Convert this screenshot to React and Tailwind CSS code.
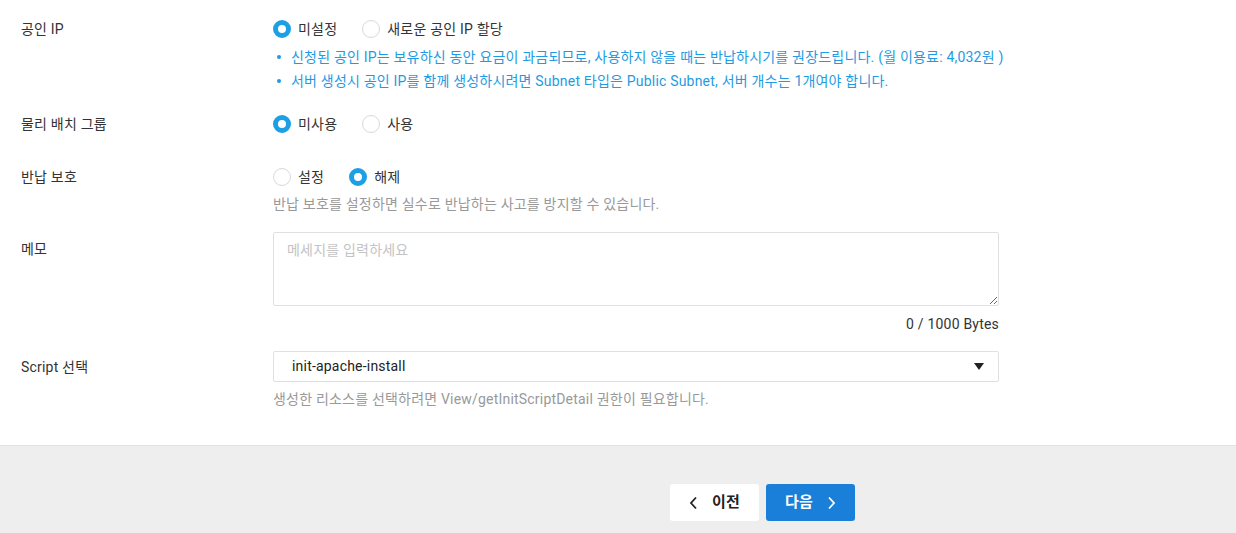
import React from "react";

const font = { fontFamily: "Roboto, 'Noto Sans CJK KR', sans-serif" };

function Radio({ checked, label }) {
  return (
    <label className="flex items-center h-[22px] cursor-pointer">
      {checked ? (
        <span className="w-[18px] h-[18px] rounded-full border-[5px] border-[#1ba0e6] bg-white box-border" />
      ) : (
        <span className="w-[18px] h-[18px] rounded-full border border-[#d9d9d9] bg-white box-border" />
      )}
      <span className="ml-[7px] text-[14px] text-[#333]">{label}</span>
    </label>
  );
}

function Row({ label, labelPt = "pt-0", children, className = "" }) {
  return (
    <div className={"flex " + className}>
      <div className={"w-[273px] pl-[21px] shrink-0 text-[14px] leading-[22px] text-[#333] " + labelPt}>{label}</div>
      <div className="flex-1">{children}</div>
    </div>
  );
}

export default function App() {
  return (
    <div style={font} className="w-[1236px] h-[533px] bg-white flex flex-col tracking-[0.2px]">
      <div className="h-[445px] pt-[18px]">
        <Row label="공인 IP">
          <div className="flex gap-[25px]">
            <Radio checked label="미설정" />
            <Radio label="새로운 공인 IP 할당" />
          </div>
          <ul className="mt-[5px] text-[14px] leading-[24px] text-[#1e9be2]">
            <li className="flex items-center">
              <span className="w-[4px] h-[4px] rounded-full bg-[#1e9be2] ml-[4px] mr-[10px]" />
              신청된 공인 IP는 보유하신 동안 요금이 과금되므로, 사용하지 않을 때는 반납하시기를 권장드립니다. (월 이용료: 4,032원 )
            </li>
            <li className="flex items-center">
              <span className="w-[4px] h-[4px] rounded-full bg-[#1e9be2] ml-[4px] mr-[10px]" />
              서버 생성시 공인 IP를 함께 생성하시려면 Subnet 타입은 Public Subnet, 서버 개수는 1개여야 합니다.
            </li>
          </ul>
        </Row>
        <Row label="물리 배치 그룹" className="mt-[20px]">
          <div className="flex gap-[25px]">
            <Radio checked label="미사용" />
            <Radio label="사용" />
          </div>
        </Row>
        <Row label="반납 보호" className="mt-[31px]">
          <div className="flex gap-[25px]">
            <Radio label="설정" />
            <Radio checked label="해제" />
          </div>
          <div className="mt-[6px] text-[14px] leading-[20px] text-[#999]">
            반납 보호를 설정하면 실수로 반납하는 사고를 방지할 수 있습니다.
          </div>
        </Row>
        <Row label="메모" labelPt="pt-[6px]" className="mt-[18px]">
          <textarea
            placeholder="메세지를 입력하세요"
            className="block w-[726px] h-[74px] border border-[#e0e0e0] rounded-[2px] px-[13px] py-[6px] text-[14px] leading-[22px] text-[#333] placeholder:text-[#c4c4c4] outline-none resize-y"
            style={font}
          />
          <div className="w-[726px] mt-[8px] text-right text-[14px] leading-[20px] text-[#333]">0 / 1000 Bytes</div>
        </Row>
        <Row label="Script 선택" labelPt="pt-[5px]" className="mt-[17px]">
          <div className="w-[726px] h-[31px] border border-[#e0e0e0] rounded-[2px] flex items-center pl-[18px] pr-[14px] justify-between">
            <span className="text-[14px] text-[#222]">init-apache-install</span>
            <svg width="10" height="7" viewBox="0 0 10 7"><path d="M0 0h10L5 7z" fill="#222" /></svg>
          </div>
          <div className="mt-[7px] text-[14px] leading-[20px] text-[#999]">
            생성한 리소스를 선택하려면 View/getInitScriptDetail 권한이 필요합니다.
          </div>
        </Row>
      </div>
      <div className="flex-1 bg-[#eeeeee] border-t border-[#e2e2e2] pt-[38px] pl-[670px] flex gap-[7px] items-start">
        <button className="w-[89px] h-[37px] bg-white rounded-[3px] flex items-center justify-center gap-[14px] text-[15px] font-bold text-[#222]">
          <svg width="9" height="14" viewBox="0 0 9 14"><path d="M7 1.5L2 7l5 5.5" fill="none" stroke="#222" strokeWidth="1.8" /></svg>
          이전
        </button>
        <button className="w-[89px] h-[37px] bg-[#1a7fd8] rounded-[3px] flex items-center justify-center gap-[14px] text-[15px] font-bold text-white">
          다음
          <svg width="9" height="14" viewBox="0 0 9 14"><path d="M2 1.5L7 7l-5 5.5" fill="none" stroke="#fff" strokeWidth="1.8" /></svg>
        </button>
      </div>
    </div>
  );
}
